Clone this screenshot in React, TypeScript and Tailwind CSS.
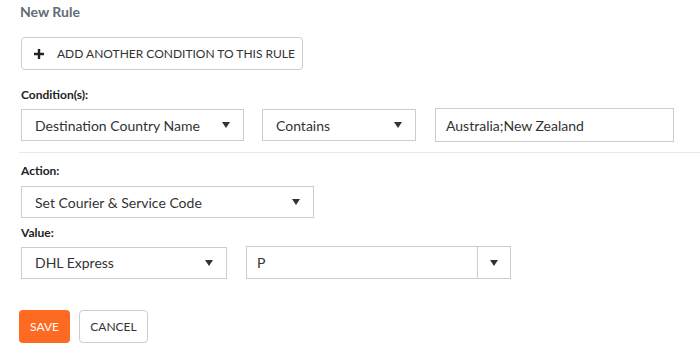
import React from 'react';

const Caret = () => (
  <svg width="8" height="6" viewBox="0 0 8 6" className="shrink-0">
    <path d="M0 0h8L4 6z" fill="#333" />
  </svg>
);

type SelectProps = { value: string; width: string };

const FakeSelect: React.FC<SelectProps> = ({ value, width }) => (
  <div
    className={`flex h-[32px] items-center justify-between border border-[#cccccc] bg-white pl-[13px] pr-[13px] ${width}`}
  >
    <span className="text-[14px] text-[#333]">{value}</span>
    <Caret />
  </div>
);

const Label: React.FC<{ children: React.ReactNode }> = ({ children }) => (
  <div className="ml-[2px] text-[12px] font-bold leading-[16px] text-[#222]">{children}</div>
);

export default function App() {
  return (
    <div
      className="h-[358px] w-[700px] bg-white pl-[19px] pt-[2px]"
      style={{ fontFamily: 'Lato, "Open Sans", sans-serif' }}
    >
      <div className="ml-[1px] text-[14px] font-bold leading-[20px] text-[#5f6b76]">New Rule</div>

      <button className="mt-[15px] ml-[2px] flex h-[33px] w-[282px] items-center rounded-[4px] border border-[#cccccc] bg-white pl-[12px]">
        <svg width="10" height="10" viewBox="0 0 10 10">
          <path d="M3.8 0h2.4v3.8H10v2.4H6.2V10H3.8V6.2H0V3.8h3.8z" fill="#222" />
        </svg>
        <span className="ml-[13px] text-[12px] uppercase text-[#333]">Add another condition to this rule</span>
      </button>

      <div className="mt-[17px]">
        <Label>Condition(s):</Label>
      </div>
      <div className="ml-[2px] mt-[5px] flex items-center">
        <FakeSelect value="Destination Country Name" width="w-[223px]" />
        <div className="ml-[18px]">
          <FakeSelect value="Contains" width="w-[154px]" />
        </div>
        <div className="ml-[19px] flex h-[34px] w-[239px] items-center border border-[#cccccc] pl-[10px] text-[14px] text-[#333]">
          Australia;New Zealand
        </div>
      </div>

      <div className="mt-[10px] h-px bg-[#e8eaed]" />

      <div className="mt-[10px]">
        <Label>Action:</Label>
      </div>
      <div className="ml-[2px] mt-[7px]">
        <FakeSelect value="Set Courier & Service Code" width="w-[293px]" />
      </div>

      <div className="mt-[7px]">
        <Label>Value:</Label>
      </div>
      <div className="ml-[2px] mt-[5px] flex items-center">
        <FakeSelect value="DHL Express" width="w-[206px]" />
        <div className="ml-[19px] flex h-[33px] w-[265px] items-stretch border border-[#cccccc]">
          <div className="flex flex-1 items-center pl-[10px] text-[14px] text-[#333]">P</div>
          <div className="flex w-[33px] items-center justify-center border-l border-[#cccccc]">
            <Caret />
          </div>
        </div>
      </div>

      <div className="mt-[31px] flex items-center gap-[9px]">
        <button className="h-[33px] w-[51px] rounded-[4px] bg-[#ff6a22] text-[12px] uppercase text-white">
          Save
        </button>
        <button className="h-[33px] w-[69px] rounded-[4px] border border-[#cccccc] bg-white text-[12px] uppercase text-[#333]">
          Cancel
        </button>
      </div>
    </div>
  );
}
